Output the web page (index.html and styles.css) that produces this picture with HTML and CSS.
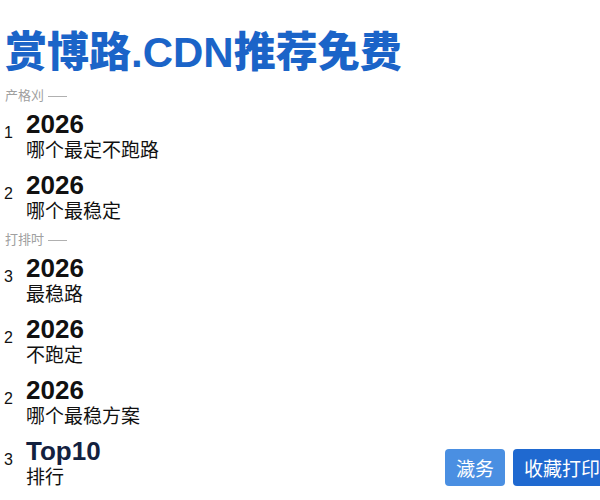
FILE: index.html
```html
<!DOCTYPE html>
<html lang="zh-CN">
<head>
  <meta charset="UTF-8">
  <meta name="viewport" content="width=device-width, initial-scale=1.0">
  <title>赏博路.CDN推荐免费</title>
  <link rel="stylesheet" href="styles.css">
</head>
<body>
  <div class="page">
    <h1 class="pageTitle">赏博路.CDN推荐免费</h1>

    <!-- 第一组 -->
    <div class="groupLabel">产格刈</div>
    <div class="item">
      <span class="rank">1</span>
      <div class="itemText">
        <div class="year">2026</div>
        <div class="desc">哪个最定不跑路</div>
      </div>
    </div>
    <div class="item">
      <span class="rank">2</span>
      <div class="itemText">
        <div class="year">2026</div>
        <div class="desc">哪个最稳定</div>
      </div>
    </div>

    <!-- 第二组 -->
    <div class="groupLabel">打排吋</div>
    <div class="item">
      <span class="rank">3</span>
      <div class="itemText">
        <div class="year">2026</div>
        <div class="desc">最稳路</div>
      </div>
    </div>
    <div class="item">
      <span class="rank">2</span>
      <div class="itemText">
        <div class="year">2026</div>
        <div class="desc">不跑定</div>
      </div>
    </div>
    <div class="item">
      <span class="rank">2</span>
      <div class="itemText">
        <div class="year">2026</div>
        <div class="desc">哪个最稳方案</div>
      </div>
    </div>
    <div class="item">
      <span class="rank">3</span>
      <div class="itemText">
        <div class="year top">Top10</div>
        <div class="desc">排行</div>
      </div>
      <!-- 右下角操作按钮 -->
      <div class="actions">
        <button class="btn btnLight">濊务</button>
        <button class="btn btnDark">收藏打印</button>
      </div>
    </div>
  </div>
</body>
</html>
```

FILE: styles.css
```css
html, body {
  margin: 0;
  padding: 0;
  overflow: hidden;
  background-color: #fff;
}

body {
  font-family: "Liberation Sans", "Noto Sans CJK SC", sans-serif;
  color: #111;
}

.page {
  padding: 27px 0 0 4px;
}

.pageTitle {
  margin: 0 0 7px 1px;
  font-size: 42px;
  line-height: 51px;
  font-weight: 900;
  color: #1b64c8;
}

/* 分组标题后面的细横线 */
.groupLabel {
  font-size: 13px;
  line-height: 22px;
  color: #a0a0a0;
  padding-left: 1px;
}
.groupLabel::after {
  content: "";
  display: inline-block;
  width: 19px;
  margin-left: 4px;
  vertical-align: middle;
  border-top: 1px solid #b0b0b0;
}

.item {
  display: flex;
  align-items: center;
  padding: 4px 0 5px;
}

.rank {
  align-self: flex-start;
  margin-top: 12px;
  width: 22px;
  font-size: 16px;
  line-height: 20px;
}

.year {
  font-size: 26px;
  line-height: 27px;
  font-weight: bold;
  color: #111;
}
.year.top {
  color: #13213f;
}

.desc {
  font-size: 19px;
  line-height: 25px;
}

.actions {
  margin: 6px -11px 0 auto;
  display: flex;
  gap: 8px;
}

.btn {
  height: 37px;
  padding: 0 11px;
  border: none;
  border-radius: 4px;
  font-family: "Liberation Sans", "Noto Sans CJK SC", sans-serif;
  font-size: 19px;
  color: #fff;
  cursor: pointer;
}
.btnLight {
  background-color: #4a8fe2;
}
.btnDark {
  background-color: #1f69d0;
}
```
